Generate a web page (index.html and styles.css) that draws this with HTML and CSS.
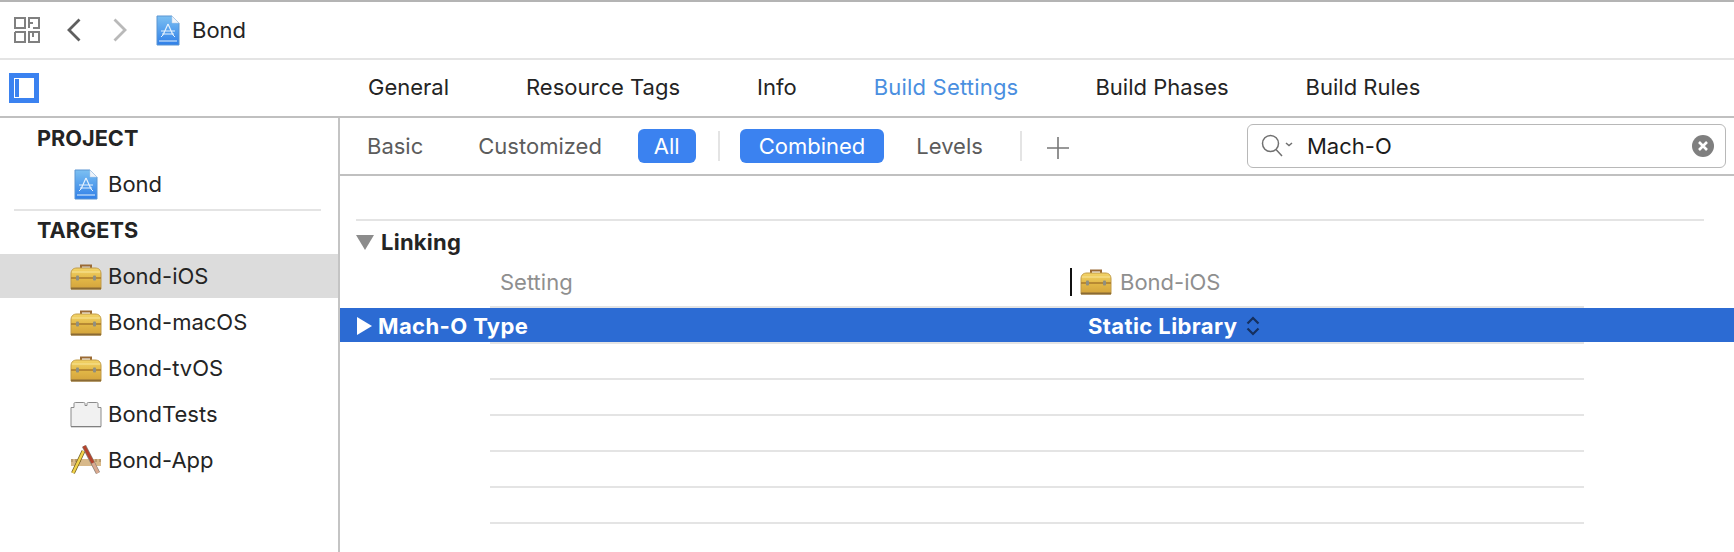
FILE: index.html
```html
<!DOCTYPE html>
<html lang="en">
<head>
    <meta charset="UTF-8">
    <title>Bond - Build Settings</title>
    <link rel="stylesheet" href="styles.css">
</head>
<body>
    <svg class="defs" width="0" height="0">
        <defs>
            <linearGradient id="docBlue" x1="0" y1="0" x2="0" y2="1">
                <stop offset="0" stop-color="#7cc0f2"/>
                <stop offset="1" stop-color="#2f7fe8"/>
            </linearGradient>
            <linearGradient id="boxGold" x1="0" y1="0" x2="0" y2="1">
                <stop offset="0" stop-color="#f3d468"/>
                <stop offset="0.5" stop-color="#e2b847"/>
                <stop offset="1" stop-color="#d3a33c"/>
            </linearGradient>
            <symbol id="icon-project" viewBox="0 0 24 31">
                <path d="M1 1h15l7 7v22H1z" fill="url(#docBlue)" stroke="#5b95d2"/>
                <path d="M16 1v7h7z" fill="#eef4fa" stroke="#b9cfe6" stroke-width="0.500"/>
                <path d="M12 9L7 20M12 9l5 11M5 16h14M6 19h12" fill="none" stroke="#e4f1fd" stroke-width="1.200"/>
                <path d="M7 20l-2 2M17 20l2 2" stroke="#e4f1fd"/>
                <path d="M3 26h18" stroke="#e4f1fd"/>
            </symbol>
            <symbol id="icon-target" viewBox="0 0 32 27">
                <path d="M11 6V2.500h10V6" fill="none" stroke="#9a6a35" stroke-width="2"/>
                <path d="M1 11c0-4 2-6 6-6h18c4 0 6 2 6 6v15H1z" fill="url(#boxGold)" stroke="#c09a48"/>
                <path d="M2 9h28" stroke="#f8e59a"/>
                <path d="M1 15h30" stroke="#a87a2c" stroke-width="1.500"/>
                <path d="M1 25.500h30" stroke="#8a6a35" stroke-width="2"/>
                <rect x="6" y="12.500" width="3" height="5" rx="1" fill="#8f8f80"/>
                <rect x="23" y="12.500" width="3" height="5" rx="1" fill="#8f8f80"/>
            </symbol>
            <symbol id="icon-brick" viewBox="0 0 32 26">
                <path d="M1 25V6h3V2c0-1 1-1 2-1h7c1 0 2 0 2 1v2h2V2c0-1 1-1 2-1h7c1 0 2 0 2 1v4h3v19z" fill="#f1f1f1" stroke="#8b8b8b"/>
                <path d="M1 25.300h30" stroke="#7d7d7d"/>
            </symbol>
            <symbol id="icon-app" viewBox="0 0 30 30">
                <rect x="0" y="14" width="30" height="7" fill="#d8b98a"/>
                <path d="M1 14v3M5 14v3M9 14v3M21 14v3M25 14v3M29 14v3" stroke="#9a7c50"/>
                <path d="M12.500 6L2 28" stroke="#6d5a20" stroke-width="4"/>
                <path d="M12.500 6L2 28" stroke="#f2d34a" stroke-width="2.500"/>
                <path d="M13 1L27 28" stroke="#8a8078" stroke-width="4.500"/>
                <path d="M13 1L22 18" stroke="#b5432c" stroke-width="3"/>
                <path d="M22 18L27 28" stroke="#d9a98f" stroke-width="3"/>
            </symbol>
        </defs>
    </svg>

    <header class="toolbar">
        <svg class="grid-icon" viewBox="0 0 26 26" fill="none" stroke="#808080" stroke-width="2">
            <path d="M1 1h10v10H1zM15 6V1h10v10h-6M15 6h4M15 6v5M1 15h6M1 15v10h10v-6M7 15h4v4M15 15h10v10H15zM19 15v5"/>
        </svg>
        <svg class="chevron" viewBox="0 0 14 24" fill="none" stroke="#5f5f5f" stroke-width="2.800"><path d="M12.500 1.500L2 12l10.500 10.500"/></svg>
        <svg class="chevron chevron-next" viewBox="0 0 14 24" fill="none" stroke="#b9b9b9" stroke-width="2.800"><path d="M1.500 1.500L12 12 1.500 22.500"/></svg>
        <svg class="doc-icon"><use href="#icon-project"/></svg>
        <span class="crumb">Bond</span>
    </header>

    <nav class="tabbar">
        <div class="sidebar-toggle"><span></span></div>
        <ul class="tabs">
            <li>General</li>
            <li>Resource Tags</li>
            <li>Info</li>
            <li class="active">Build Settings</li>
            <li>Build Phases</li>
            <li>Build Rules</li>
        </ul>
    </nav>

    <div class="main">
        <aside class="sidebar">
            <h3 class="first">PROJECT</h3>
            <div class="item project-item"><svg class="doc-icon"><use href="#icon-project"/></svg>Bond</div>
            <hr>
            <h3 class="targets">TARGETS</h3>
            <div class="item selected"><svg class="item-icon"><use href="#icon-target"/></svg>Bond-iOS</div>
            <div class="item"><svg class="item-icon"><use href="#icon-target"/></svg>Bond-macOS</div>
            <div class="item"><svg class="item-icon"><use href="#icon-target"/></svg>Bond-tvOS</div>
            <div class="item"><svg class="item-icon"><use href="#icon-brick"/></svg>BondTests</div>
            <div class="item"><svg class="item-icon app-icon"><use href="#icon-app"/></svg>Bond-App</div>
        </aside>

        <section class="content">
            <div class="filterbar">
                <span class="filter">Basic</span>
                <span class="filter customized">Customized</span>
                <span class="filter pill all">All</span>
                <span class="sep"></span>
                <span class="filter pill combined">Combined</span>
                <span class="filter levels">Levels</span>
                <span class="sep sep-right"></span>
                <svg class="plus" viewBox="0 0 24 24" stroke="#777" stroke-width="1.600"><path d="M12 1v22M1 12h22"/></svg>
                <div class="search">
                    <svg class="search-icon" viewBox="0 0 32 24" fill="none" stroke="#707070" stroke-width="1.500">
                        <circle cx="9.500" cy="9.500" r="8"/>
                        <path d="M15 15.500l6 6.500M25 9l3 2.500 3-2.500"/>
                    </svg>
                    <span class="search-text">Mach-O</span>
                    <svg class="clear-icon" viewBox="0 0 22 22">
                        <circle cx="11" cy="11" r="11" fill="#7f7f7f"/>
                        <path d="M7 7l8 8M15 7l-8 8" stroke="#fff" stroke-width="2.600"/>
                    </svg>
                </div>
            </div>

            <div class="settings">
                <div class="group-title">
                    <span class="tri-down"></span>
                    <span>Linking</span>
                </div>
                <div class="col-head">
                    <span class="col-setting">Setting</span>
                    <span class="col-target"><svg class="item-icon"><use href="#icon-target"/></svg>Bond-iOS</span>
                </div>
                <div class="row-selected">
                    <span class="tri-right"></span>
                    <span class="row-name">Mach-O Type</span>
                    <span class="row-value">Static Library</span>
                    <svg class="stepper" viewBox="0 0 14 20" fill="none" stroke="#16305f" stroke-width="2.200"><path d="M1.500 7.500L7 2l5.500 5.500M1.500 12.500L7 18l5.500-5.500"/></svg>
                </div>
                <div class="blank-row"></div>
                <div class="blank-row"></div>
                <div class="blank-row"></div>
                <div class="blank-row"></div>
                <div class="blank-row"></div>
                <div class="blank-row"></div>
            </div>
        </section>
    </div>
</body>
</html>
```

FILE: styles.css
```css
* {
    box-sizing: border-box;
}
body {
    margin: 0;
    height: 552px;
    overflow: hidden;
    display: flex;
    flex-direction: column;
    background: #fff;
    color: #242424;
    font-family: Inter, "Noto Sans", sans-serif;
    font-size: 22px;
}
.defs {
    position: absolute;
}
.toolbar {
    height: 60px;
    flex: none;
    display: flex;
    align-items: center;
    padding-left: 14px;
    border-top: 2px solid #b4b4b4;
    border-bottom: 2px solid #e4e4e4;
}
.grid-icon {
    width: 26px;
    height: 26px;
}
.chevron {
    width: 14px;
    height: 24px;
    margin-left: 27px;
}
.chevron-next {
    margin-left: 32px;
}
.doc-icon {
    width: 24px;
    height: 31px;
    flex: none;
}
.toolbar .doc-icon {
    margin-left: 29px;
}
.crumb {
    margin-left: 12px;
}
.tabbar {
    height: 58px;
    flex: none;
    display: flex;
    align-items: center;
    border-bottom: 2px solid #c0c0c0;
    padding-left: 9px;
}
.sidebar-toggle {
    width: 30px;
    height: 30px;
    border: 5px solid #3b82f0;
    padding: 1px;
}
.sidebar-toggle span {
    display: block;
    width: 4px;
    height: 18px;
    background: #3b82f0;
}
.tabs {
    list-style: none;
    margin: 0 0 0 329px;
    padding: 0 0 2px;
    display: flex;
    gap: 77px;
}
.tabs .active {
    color: #4a8fe0;
    letter-spacing: 0.2px;
}
.main {
    flex: 1;
    display: flex;
    min-height: 0;
}
.sidebar {
    width: 340px;
    flex: none;
    border-right: 2px solid #c4c4c4;
}
.sidebar h3 {
    margin: 0;
    height: 40px;
    padding: 0 0 0 37px;
    font-size: 21.7px;
    font-weight: 700;
    line-height: 38px;
}
.sidebar .first {
    margin-top: 1px;
}
.sidebar .targets {
    margin-bottom: 3px;
}
.sidebar hr {
    margin: 0 17px 0 14px;
    border: none;
    border-top: 2px solid #e4e4e4;
}
.item {
    height: 46px;
    display: flex;
    align-items: center;
    padding-left: 70px;
}
.project-item {
    padding-left: 74px;
    height: 50px;
}
.project-item .doc-icon {
    margin-right: 10px;
}
.item-icon {
    width: 32px;
    height: 27px;
    flex: none;
    margin-right: 6px;
}
.app-icon {
    width: 30px;
    height: 30px;
    margin-left: 1px;
    margin-right: 7px;
}
.selected {
    background: #dcdcdc;
    height: 44px;
    margin-bottom: 1px;
}
.content {
    flex: 1;
    min-width: 0;
}
.filterbar {
    height: 58px;
    display: flex;
    align-items: center;
    padding-left: 27px;
    border-bottom: 2px solid #c0c0c0;
    color: #5c5c5c;
}
.customized {
    margin-left: 55px;
}
.pill {
    height: 34px;
    display: flex;
    align-items: center;
    padding: 0 16px;
    background: #3b82f0;
    border-radius: 6px;
    color: #fff;
}
.all {
    margin-left: 36px;
}
.sep {
    width: 2px;
    height: 30px;
    background: #e4e4e4;
    margin-left: 22px;
}
.combined {
    margin-left: 20px;
    padding: 0 19px;
}
.levels {
    margin-left: 32px;
}
.sep-right {
    margin-left: 37px;
}
.plus {
    width: 24px;
    height: 24px;
    margin: 4px 0 0 24px;
}
.search {
    width: 479px;
    height: 44px;
    margin-left: auto;
    margin-right: 8px;
    display: flex;
    align-items: center;
    padding-left: 13px;
    border: 1px solid #b8b8b8;
    border-radius: 6px;
    color: #1c1c1c;
}
.search-icon {
    width: 32px;
    height: 24px;
}
.search-text {
    margin-left: 14px;
}
.clear-icon {
    width: 22px;
    height: 22px;
    margin-left: auto;
    margin-right: 11px;
}
.settings {
    padding-top: 43px;
}
.group-title {
    margin-left: 16px;
    margin-right: 30px;
    height: 46px;
    padding-bottom: 2px;
    display: flex;
    align-items: center;
    border-top: 2px solid #e4e4e4;
    font-weight: 700;
    letter-spacing: 0.25px;
}
.tri-down {
    width: 0;
    height: 0;
    margin-right: 7px;
    border-left: 9px solid transparent;
    border-right: 9px solid transparent;
    border-top: 15px solid #8c8c8c;
}
.col-head {
    height: 43px;
    padding-bottom: 8px;
    display: flex;
    align-items: center;
    margin-left: 150px;
    margin-right: 150px;
    border-bottom: 2px solid #e4e4e4;
    color: #8f8f8f;
}
.col-setting {
    margin-left: 10px;
    width: 570px;
}
.col-target {
    display: flex;
    align-items: center;
}
.col-target::before {
    content: "";
    width: 2px;
    height: 28px;
    margin-right: 8px;
    background: #111;
}
.col-target .item-icon {
    margin-right: 8px;
}
.row-selected {
    height: 34px;
    padding: 2px 0 0 17px;
    display: flex;
    align-items: center;
    background: #2c6bd3;
    color: #fff;
    font-weight: 700;
    letter-spacing: 0.4px;
}
.tri-right {
    width: 0;
    height: 0;
    margin-right: 6px;
    border-top: 9px solid transparent;
    border-bottom: 9px solid transparent;
    border-left: 15px solid #fff;
}
.row-name {
    width: 710px;
}
.stepper {
    width: 14px;
    height: 20px;
    margin-left: 9px;
}
.blank-row {
    height: 36px;
    margin: 0 150px;
    border-bottom: 2px solid #e4e4e4;
}
.row-selected + .blank-row {
    height: 2px;
}
```
